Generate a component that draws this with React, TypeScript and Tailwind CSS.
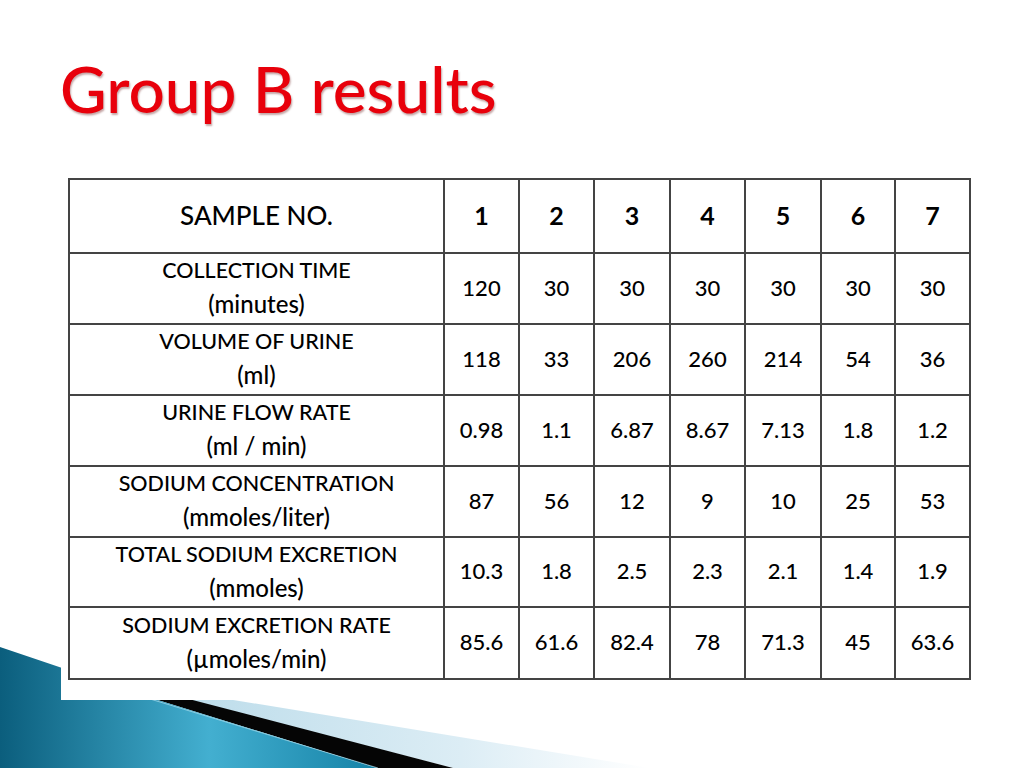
import React from 'react';

const rows: { label: string; unit: string; values: string[] }[] = [
  { label: 'COLLECTION TIME', unit: '(minutes)', values: ['120', '30', '30', '30', '30', '30', '30'] },
  { label: 'VOLUME OF URINE', unit: '(ml)', values: ['118', '33', '206', '260', '214', '54', '36'] },
  { label: 'URINE FLOW RATE', unit: '(ml / min)', values: ['0.98', '1.1', '6.87', '8.67', '7.13', '1.8', '1.2'] },
  { label: 'SODIUM CONCENTRATION', unit: '(mmoles/liter)', values: ['87', '56', '12', '9', '10', '25', '53'] },
  { label: 'TOTAL SODIUM EXCRETION', unit: '(mmoles)', values: ['10.3', '1.8', '2.5', '2.3', '2.1', '1.4', '1.9'] },
  { label: 'SODIUM EXCRETION RATE', unit: '(\u00b5moles/min)', values: ['85.6', '61.6', '82.4', '78', '71.3', '45', '63.6'] },
];

const rowHeights = ['h-[71px]', 'h-[71px]', 'h-[71px]', 'h-[71px]', 'h-[70px]', 'h-[72px]'];

function Decoration() {
  return (
    <svg className="absolute inset-0 h-full w-full" viewBox="0 0 1024 768" preserveAspectRatio="none">
      <defs>
        <linearGradient id="band" x1="180" y1="0" x2="650" y2="0" gradientUnits="userSpaceOnUse">
          <stop offset="0" stopColor="#bcdcea" />
          <stop offset="0.6" stopColor="#dcedf5" />
          <stop offset="1" stopColor="#ffffff" />
        </linearGradient>
        <linearGradient id="wave" x1="0" y1="0" x2="380" y2="0" gradientUnits="userSpaceOnUse">
          <stop offset="0" stopColor="#0b5e7d" />
          <stop offset="0.55" stopColor="#43afd0" />
          <stop offset="1" stopColor="#1582a6" />
        </linearGradient>
      </defs>
      <polygon points="175,697 215,697 650,768 453,768" fill="url(#band)" />
      <polygon points="148,697 181,697 453,768 377,768" fill="#050505" />
      <polygon points="0,647 148,697 377,768 0,768" fill="url(#wave)" />
      <line x1="150" y1="699" x2="378" y2="768" stroke="#a8dcec" strokeWidth="1" opacity="0.7" />
    </svg>
  );
}

export default function App() {
  return (
    <div className="relative h-[768px] w-[1024px] overflow-hidden bg-white font-['Lato',sans-serif] text-black">
      <Decoration />
      <h1 className="relative pl-[60px] pt-[57px] text-[64px] font-medium leading-none text-[#e8000b] [text-shadow:1px_2px_2px_rgba(90,0,0,0.35)]">
        Group B results
      </h1>
      <div className="relative ml-[61px] mt-[47px] w-fit bg-white px-[7px] pt-[10px] pb-[20px] font-medium">
        <div className="grid grid-cols-[375px_75px_75px_76px_75px_76px_74px_75px] border-l-2 border-t-2 border-[#444]">
          <div className="flex h-[74px] items-center justify-center border-b-2 border-r-2 border-[#444] pb-[1px] text-[26px]">
            SAMPLE NO.
          </div>
          {['1', '2', '3', '4', '5', '6', '7'].map((n) => (
            <div key={n} className="flex h-[74px] items-center justify-center border-b-2 border-r-2 border-[#444] pb-[1px] text-[25px] font-bold">
              {n}
            </div>
          ))}
          {rows.map((r, i) => (
            <React.Fragment key={r.label}>
              <div className={`flex ${rowHeights[i]} flex-col items-center justify-center border-b-2 border-r-2 border-[#444] pb-[3px] leading-[33px]`}>
                <span className="text-[21.5px]">{r.label}</span>
                <span className="text-[24px]">{r.unit}</span>
              </div>
              {r.values.map((v, j) => (
                <div key={j} className={`flex ${rowHeights[i]} items-center justify-center border-b-2 border-r-2 border-[#444] pb-[3px] text-[22px]`}>
                  {v}
                </div>
              ))}
            </React.Fragment>
          ))}
        </div>
      </div>
    </div>
  );
}
